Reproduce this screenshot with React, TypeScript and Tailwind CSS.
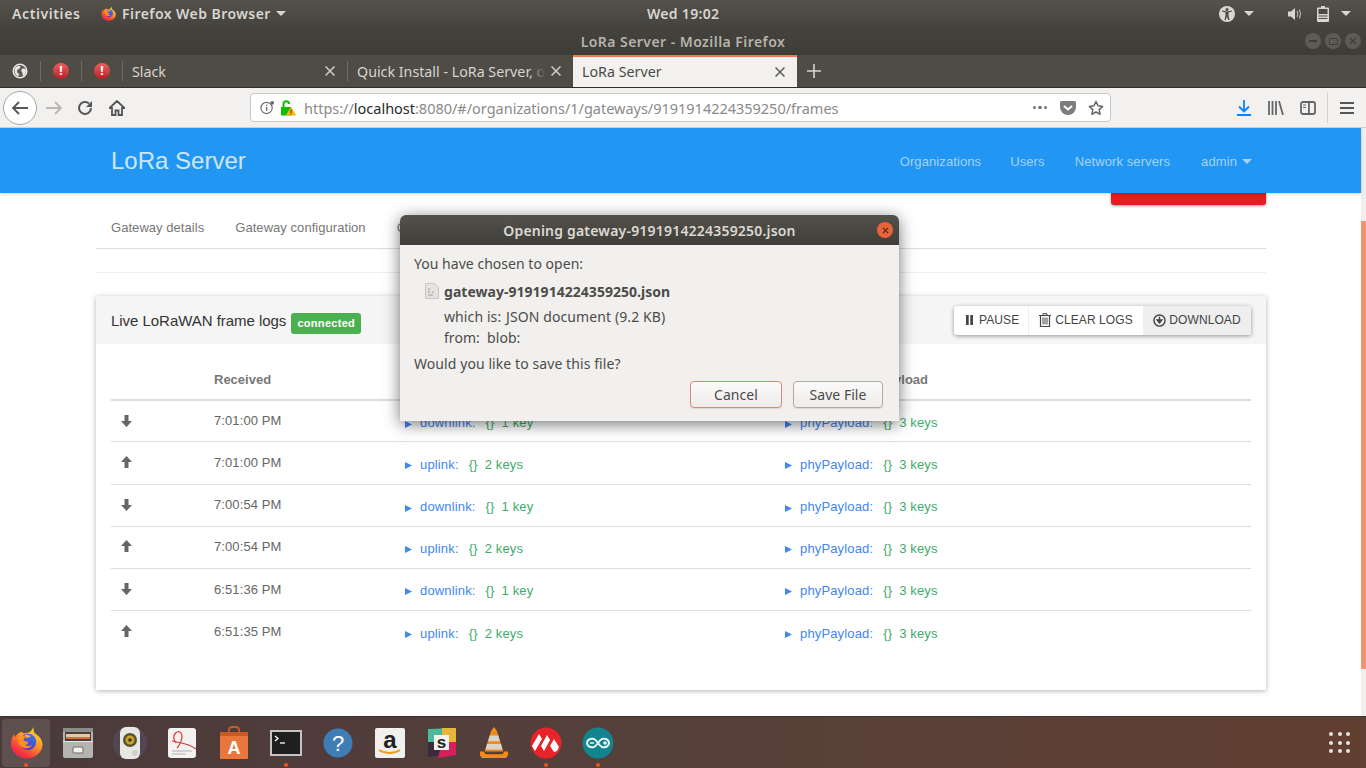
const ui = "font-['Noto_Sans',sans-serif]";
const web = "font-['Liberation_Sans',sans-serif]";

function Caret({ className = "" }: { className?: string }) {
  return (
    <svg viewBox="0 0 10 5" className={`h-[5px] w-[10px] ${className}`}>
      <path d="M0 0h10L5 5z" fill="currentColor" />
    </svg>
  );
}

function FirefoxLogo({ size }: { size: number }) {
  const id = `ff${size}`;
  return (
    <svg viewBox="0 0 32 32" width={size} height={size}>
      <defs>
        <linearGradient id={id} x1="0.85" y1="0" x2="0.2" y2="1">
          <stop offset="0" stopColor="#ffe13a" />
          <stop offset="0.4" stopColor="#ff9a22" />
          <stop offset="0.8" stopColor="#f5343f" />
          <stop offset="1" stopColor="#e8205f" />
        </linearGradient>
        <linearGradient id={`${id}b`} x1="0.8" y1="0" x2="0.2" y2="1">
          <stop offset="0" stopColor="#2f7cf0" />
          <stop offset="1" stopColor="#6a2ab0" />
        </linearGradient>
      </defs>
      <path d="M22.5 1c.5 3 .5 4.500 1.500 6 4 2.500 7.500 6 7.500 11 0 7.500-7 13.500-15 13.500S1 25.500 1 17.500C1 13.500 2 10.500 4 8l1 3c1-2.500 3.500-4.500 6-5.500 1 1 2 1.500 3.500 1.500 3.500 0 7-2 8-6z" fill={`url(#${id})`} />
      <circle cx="17.500" cy="15.500" r="8" fill={`url(#${id}b)`} />
      <path d="M8 11c-1 6 2 10 7 10.500 3 .2 5.500-1 6.500-3-2 1-5 1.200-7 0 2-.3 3.500-1.500 3-3-1.500-.8-3.500-.8-4.500-2 .5-1.500 2-2 3-3-3-1.500-6-1-8 .5z" fill="#ff8f1f" />
      <path d="M14 8.500c2.500-.5 5 .5 6.500 2-1.500 0-3 .5-4 1.500-1-1.500-2-2.500-2.500-3.500z" fill="#ffb02e" />
    </svg>
  );
}

function AlertDot() {
  return (
    <span className="flex h-[16px] w-[16px] items-center justify-center rounded-full bg-gradient-to-b from-[#e8605f] to-[#b81c25] text-[12px] font-bold leading-none text-white">
      !
    </span>
  );
}

function Globe() {
  return (
    <svg viewBox="0 0 16 16" className="h-[16px] w-[16px]">
      <circle cx="8" cy="8" r="7.5" fill="#e8e8e6" />
      <circle cx="8" cy="8" r="6" fill="#5c5a55" />
      <path d="M3 5c2-2 3-2 5-2 1 1 0 2-1 3S5 6 5 8s1 2 2 3-1 2-2 2c-2-2-3-5-2-8zm7 1c2-1 3 0 4 1 0 3-1 5-3 6-1-1 0-3-1-4s-1-2 0-3z" fill="#e8e8e6" />
    </svg>
  );
}

function Close({ dark }: { dark?: boolean }) {
  return (
    <svg viewBox="0 0 10 10" className="h-[10px] w-[10px]">
      <path d="M.5.5l9 9M9.5.5l-9 9" stroke={dark ? "#5a5a5a" : "#cfcdc8"} strokeWidth="1.5" fill="none" />
    </svg>
  );
}

function TopBar() {
  return (
    <div className={`${ui} flex h-[27px] items-center bg-gradient-to-b from-[#55524b] to-[#45433d] text-[14px] font-semibold text-[#d8d6d1]`}>
      <div className="flex flex-1 items-center">
        <span className="ml-[12px] w-[68px] tracking-[0.6px]">Activities</span>
        <span className="ml-[21px]"><FirefoxLogo size={15} /></span>
        <span className="ml-[6px] tracking-[0.45px]">Firefox Web Browser</span>
        <Caret className="ml-[5px]" />
      </div>
      <span className="w-[72px] whitespace-nowrap text-center tracking-[0.3px]">Wed 19:02</span>
      <div className="flex flex-1 items-center justify-end">
        <svg viewBox="0 0 16 16" className="h-[16px] w-[16px]">
          <circle cx="8" cy="8" r="8" fill="currentColor" />
          <circle cx="8" cy="3.6" r="1.5" fill="#4c4a44" />
          <path d="M3 5.5l3.5 1v3L5.5 14h1.3L8 10.5 9.2 14h1.3l-1-4.500v-3l3.500-1-.3-1L8 5.500 3.300 4.500z" fill="#4c4a44" />
        </svg>
        <Caret className="ml-[9px]" />
        <svg viewBox="0 0 16 16" className="ml-[33px] h-[16px] w-[16px]">
          <path d="M1 5.500h3L8 2v12l-4-3.500H1z" fill="currentColor" />
          <path d="M10 5c1 1.500 1 4.500 0 6M12 3.500c2 2.500 2 6.500 0 9" stroke="currentColor" strokeWidth="1.2" fill="none" opacity=".75" />
        </svg>
        <svg viewBox="0 0 12 16" className="ml-[14px] h-[16px] w-[12px]">
          <path d="M4 0h4v1.500h3a1 1 0 011 1V15a1 1 0 01-1 1H1a1 1 0 01-1-1V2.500a1 1 0 011-1h3z" fill="currentColor" />
          <rect x="1.500" y="3" width="9" height="5" fill="#4c4a44" />
          <rect x="1.500" y="9.500" width="9" height="1" fill="#4c4a44" />
          <rect x="1.500" y="12" width="9" height="1" fill="#4c4a44" />
        </svg>
        <Caret className="ml-[12px] mr-[15px]" />
      </div>
    </div>
  );
}

function TitleBar() {
  return (
    <div className={`${ui} relative flex h-[28px] items-center justify-center bg-gradient-to-b from-[#45433d] to-[#3d3c36] text-[14px] font-semibold tracking-[0.45px] text-[#b5b3ad]`}>
      <span>LoRa Server - Mozilla Firefox</span>
      <div className="absolute right-[5px] top-[6px] flex gap-[4px]">
        {["min", "max", "close"].map((k) => (
          <span key={k} className="flex h-[16px] w-[16px] items-center justify-center rounded-full bg-[#5d5b55]">
            {k === "min" && <span className="h-[1.5px] w-[8px] bg-[#3f3d38]" />}
            {k === "max" && <span className="h-[7px] w-[9px] rounded-[1px] border border-[#3f3d38]" />}
            {k === "close" && (
              <svg viewBox="0 0 8 8" className="h-[8px] w-[8px]">
                <path d="M1 1l6 6M7 1L1 7" stroke="#3f3d38" strokeWidth="1.3" />
              </svg>
            )}
          </span>
        ))}
      </div>
    </div>
  );
}

function TabSep() {
  return (
    <div className="flex h-[32px] items-center">
      <span className="h-[20px] w-px bg-[#6e6b64]" />
    </div>
  );
}

function TabStrip() {
  return (
    <div className={`${ui} flex h-[33px] items-end border-b border-[#2f2e2a] bg-[#4f4c45] text-[14.25px] text-[#d6d4cf]`}>
      <div className="flex h-[32px] w-[40px] items-center justify-center"><Globe /></div>
      <TabSep />
      <div className="flex h-[32px] w-[40px] items-center justify-center"><AlertDot /></div>
      <TabSep />
      <div className="flex h-[32px] w-[40px] items-center justify-center"><AlertDot /></div>
      <TabSep />
      <div className="flex h-[32px] w-[224px] items-center pl-[9px] pr-[12px]">
        <span className="flex-1 translate-y-[1px]">Slack</span>
        <Close />
      </div>
      <TabSep />
      <div className="flex h-[32px] w-[225px] items-center pl-[9px] pr-[12px]">
        <span className="relative translate-y-[1px] whitespace-nowrap">
          Quick Install - LoRa Server, o
          <span className="absolute inset-y-0 right-0 w-[16px] bg-gradient-to-r from-transparent to-[#4f4c45]" />
        </span>
        <span className="ml-auto"><Close /></span>
      </div>
      <div className="flex h-[32px] w-[224px] items-center border-t-2 border-[#f0774f] bg-[#f2f1ef] pl-[9px] pr-[12px] text-[#4a4a48]">
        <span className="flex-1">LoRa Server</span>
        <Close dark />
      </div>
      <div className="flex h-[32px] w-[34px] items-center justify-center">
        <svg viewBox="0 0 14 14" className="h-[14px] w-[14px]">
          <path d="M7 0v14M0 7h14" stroke="#d6d4cf" strokeWidth="1.6" />
        </svg>
      </div>
    </div>
  );
}

function Toolbar() {
  return (
    <div className={`${ui} flex h-[40px] items-center border-b border-[#cfcdca] bg-[#f2f1ef] text-[#555]`}>
      <div className="ml-[3px] flex h-[34px] w-[34px] items-center justify-center rounded-full border border-[#a8a8a6] bg-white">
        <svg viewBox="0 0 18 16" className="h-[16px] w-[18px]">
          <path d="M17 8H2M8 2L2 8l6 6" stroke="#555" strokeWidth="1.8" fill="none" />
        </svg>
      </div>
      <svg viewBox="0 0 18 16" className="ml-[8px] h-[16px] w-[18px]">
        <path d="M1 8h15M10 2l6 6-6 6" stroke="#b8b7b5" strokeWidth="1.8" fill="none" />
      </svg>
      <svg viewBox="0 0 16 16" className="ml-[14px] h-[16px] w-[16px]">
        <path d="M14 8a6 6 0 11-2-4.500" stroke="#555" strokeWidth="2" fill="none" />
        <path d="M15 1v6H9z" fill="#555" />
      </svg>
      <svg viewBox="0 0 16 16" className="ml-[16px] h-[16px] w-[16px]">
        <path d="M8 1L0.500 8H3v7h3.500v-4.500h3V15H13V8h2.500z" fill="none" stroke="#555" strokeWidth="1.8" />
      </svg>
      <div className="ml-[125px] flex h-[29px] w-[861px] items-center rounded-[4px] border border-[#c9c7c4] bg-white pl-[9px] pr-[6px]">
        <svg viewBox="0 0 16 16" className="h-[15px] w-[15px]">
          <circle cx="7" cy="8.500" r="6" fill="none" stroke="#6a6a6a" strokeWidth="1.2" />
          <rect x="6.300" y="7.500" width="1.500" height="4" fill="#6a6a6a" />
          <rect x="6.300" y="5" width="1.500" height="1.500" fill="#6a6a6a" />
          <circle cx="13" cy="3" r="2" fill="#6a6a6a" />
        </svg>
        <svg viewBox="0 0 16 16" className="ml-[5px] h-[16px] w-[16px]">
          <path d="M1 7h10v8.500H1z" fill="#12bc00" />
          <path d="M3.500 7V4a2.800 2.800 0 015.600 0" stroke="#12bc00" strokeWidth="2" fill="none" />
          <path d="M11 6.500l5 9H6z" fill="#ffb400" />
          <rect x="10.500" y="9.500" width="1" height="3.500" fill="#333" />
          <rect x="10.500" y="13.700" width="1" height="1" fill="#333" />
        </svg>
        <span className="ml-[8px] translate-y-[1px] whitespace-nowrap text-[14.5px] tracking-[-0.015px] text-[#8a8a88]">
          https://<span className="text-[#2a2a2a]">localhost</span>:8080/#/organizations/1/gateways/9191914224359250/frames
        </span>
        <div className="ml-auto flex items-center">
          <span className="flex gap-[2px]">
            <i className="h-[3.5px] w-[3.5px] rounded-full bg-[#777]" />
            <i className="h-[3.5px] w-[3.5px] rounded-full bg-[#777]" />
            <i className="h-[3.5px] w-[3.5px] rounded-full bg-[#777]" />
          </span>
          <svg viewBox="0 0 16 14" className="ml-[13px] h-[14px] w-[16px]">
            <path d="M1.500 0h13A1.500 1.500 0 0116 1.500V6a8 8 0 01-16 0V1.500A1.500 1.500 0 011.500 0z" fill="#7d7d7d" />
            <path d="M4 5l4 3.500L12 5" stroke="#fff" strokeWidth="2" fill="none" />
          </svg>
          <svg viewBox="0 0 16 16" className="ml-[12px] h-[16px] w-[16px]">
            <path d="M8 1.500l2 4.300 4.700.6-3.500 3.200.9 4.700L8 12l-4.100 2.300.9-4.700L1.300 6.400 6 5.800z" fill="none" stroke="#666" strokeWidth="1.500" strokeLinejoin="round" />
          </svg>
        </div>
      </div>
      <svg viewBox="0 0 14 16" className="ml-[126px] h-[16px] w-[14px]">
        <path d="M7 0v11M2 6.500l5 5 5-5" stroke="#0a84ff" strokeWidth="1.800" fill="none" />
        <rect y="14" width="14" height="2" fill="#0a84ff" />
      </svg>
      <svg viewBox="0 0 16 14" className="ml-[17px] h-[14px] w-[16px]">
        <path d="M1 0v14M4.500 0v14M8 0v14M11 0l4 14" stroke="#666" strokeWidth="1.800" fill="none" />
      </svg>
      <svg viewBox="0 0 16 14" className="ml-[16px] h-[14px] w-[16px]">
        <rect x="1" y="1" width="14" height="12" rx="2" fill="none" stroke="#666" strokeWidth="1.800" />
        <rect x="8" y="1" width="1.800" height="12" fill="#666" />
        <path d="M3 4h3M3 6.500h3" stroke="#666" strokeWidth="1" />
      </svg>
      <span className="ml-[11px] h-[31px] w-px bg-[#d5d3d0]" />
      <svg viewBox="0 0 14 12" className="ml-[12px] h-[12px] w-[14px]">
        <path d="M0 1h14M0 6h14M0 11h14" stroke="#555" strokeWidth="1.800" />
      </svg>
    </div>
  );
}

function NavBar() {
  return (
    <nav className="relative z-10 flex h-[65px] shrink-0 items-center bg-[#2196f3] pl-[111px] pr-[109px] shadow-[0_1px_3px_rgba(0,0,0,0.2)]">
      <span className="text-[24px] text-[#cfe6fb]">LoRa Server</span>
      <div className="ml-auto flex translate-y-[1px] items-center text-[13px] tracking-[0.1px] text-[#a5d3f9]">
        <span>Organizations</span>
        <span className="ml-[29px]">Users</span>
        <span className="ml-[30px]">Network servers</span>
        <span className="ml-[31px]">admin</span>
        <Caret className="ml-[5px] h-[4px] w-[8px]" />
      </div>
    </nav>
  );
}

const rows = [
  { dir: "down", time: "7:01:00 PM", name: "downlink", keys: "1 key" },
  { dir: "up", time: "7:01:00 PM", name: "uplink", keys: "2 keys" },
  { dir: "down", time: "7:00:54 PM", name: "downlink", keys: "1 key" },
  { dir: "up", time: "7:00:54 PM", name: "uplink", keys: "2 keys" },
  { dir: "down", time: "6:51:36 PM", name: "downlink", keys: "1 key" },
  { dir: "up", time: "6:51:35 PM", name: "uplink", keys: "2 keys" },
];

function JsonCell({ name, keys, low }: { name: string; keys: string; low: boolean }) {
  return (
    <div className={`flex items-center whitespace-nowrap text-[13px] tracking-[0.15px] ${low ? "translate-y-[2px]" : "translate-y-[1px]"}`}>
      <svg viewBox="0 0 7 7" className="h-[7px] w-[7px] translate-y-[1px]">
        <path d="M0 0l7 3.500L0 7z" fill="#4285f4" />
      </svg>
      <span className="ml-[8px] text-[#4285f4]">{name}:</span>
      <span className="ml-[10px] text-[#3dab6a]">{"{}"}</span>
      <span className="ml-[7px] text-[#3dab6a]">{keys}</span>
    </div>
  );
}

function LogsCard() {
  return (
    <div className="mt-[23px] h-[394px] bg-white shadow-[0_1px_5px_rgba(0,0,0,0.3)]">
      <div className="flex h-[48px] items-center bg-[#f5f5f5] px-[15px]">
        <span className="translate-y-[1px] text-[15px] tracking-[-0.04px] text-[#333]">Live LoRaWAN frame logs</span>
        <span className="ml-[5px] flex h-[21px] w-[70px] translate-y-[3px] items-center justify-center rounded-[3px] bg-[#4caf50] text-[11px] font-bold tracking-[0.3px] text-white">
          connected
        </span>
        <div className="ml-auto flex h-[29px] rounded-[3px] bg-white text-[12px] tracking-[0.1px] text-[#444] shadow-[0_1px_4px_rgba(0,0,0,0.4)]">
          <span className="flex w-[75px] items-center gap-[6px] border-r border-[#eee] pl-[12px]">
            <svg viewBox="0 0 7 10" className="h-[10px] w-[7px]">
              <path d="M0 0h2.700v10H0zM4.300 0H7v10H4.300z" fill="#444" />
            </svg>
            PAUSE
          </span>
          <span className="flex w-[114px] items-center justify-center gap-[4px]">
            <svg viewBox="0 0 12 14" className="h-[14px] w-[12px]">
              <path d="M0 2.500h12M4 2.500V.7h4v1.800" stroke="#444" strokeWidth="1" fill="none" />
              <path d="M1.500 2.500v11h9v-11" stroke="#444" strokeWidth="1.200" fill="none" />
              <path d="M4 4.500v7M6 4.500v7M8 4.500v7" stroke="#444" strokeWidth="1" />
            </svg>
            CLEAR LOGS
          </span>
          <span className="flex w-[108px] items-center justify-center gap-[3px] rounded-r-[3px] bg-[#eeeeee]">
            <svg viewBox="0 0 14 14" className="h-[13px] w-[13px]">
              <circle cx="7" cy="7" r="6" fill="none" stroke="#444" strokeWidth="1.500" />
              <path d="M7 3v5M4.500 6.500L7 9.500l2.500-3z" stroke="#444" strokeWidth="1.500" fill="#444" />
            </svg>
            DOWNLOAD
          </span>
        </div>
      </div>
      <div className="px-[15px]">
        <div className="grid h-[57px] grid-cols-[103px_191px_380px_1fr] items-center border-b-2 border-[#ddd] pt-[16px] text-[13px] font-bold text-[#777]">
          <span />
          <span>Received</span>
          <span>LoRaWAN RX parameters</span>
          <span>LoRaWAN PHYPayload</span>
        </div>
        {rows.map((r, i) => (
          <div
            key={i}
            className={`grid grid-cols-[103px_191px_380px_1fr] items-center text-[13px] tracking-[0.1px] text-[#666] ${i === 0 ? "h-[41.25px]" : "h-[42.25px]"} ${i < 5 ? "border-b border-[#ddd]" : ""}`}
          >
            <span className={`pl-[10px] ${i === 0 || i === 2 ? "" : "-translate-y-[1px]"}`}>
              <svg viewBox="0 0 11 12" className="h-[12px] w-[11px]">
                <path d={r.dir === "down" ? "M3.500 0h4v6H11L5.500 12 0 6h3.500z" : "M3.500 12h4V6H11L5.500 0 0 6h3.500z"} fill="#666" />
              </svg>
            </span>
            <span className={i === 3 || i === 5 ? "-translate-y-[1px]" : ""}>{r.time}</span>
            <JsonCell name={r.name} keys={r.keys} low={i < 3} />
            <JsonCell name="phyPayload" keys="3 keys" low={i < 3} />
          </div>
        ))}
      </div>
    </div>
  );
}

function Dialog() {
  return (
    <div className={`${ui} absolute left-[400px] top-[215px] z-20 h-[206px] w-[499px] overflow-hidden rounded-t-[6px] bg-[#f1f0ee] text-[14px] text-[#4c4c4a] shadow-[0_3px_16px_rgba(0,0,0,0.55)]`}>
      <div className="relative flex h-[30px] items-center justify-center bg-gradient-to-b from-[#55524b] to-[#3e3d37] font-semibold tracking-[0.2px] text-[#dbd9d4]">
        Opening gateway-9191914224359250.json
        <span className="absolute right-[6px] top-[7px] flex h-[16px] w-[16px] items-center justify-center rounded-full bg-[#e9633a]">
          <svg viewBox="0 0 8 8" className="h-[7px] w-[7px]">
            <path d="M1 1l6 6M7 1L1 7" stroke="#4a2a1c" strokeWidth="1.400" />
          </svg>
        </span>
      </div>
      <div className="px-[14px] tracking-[0.03px]">
        <p className="mt-[9px] leading-[20px]">You have chosen to open:</p>
        <div className="ml-[11px] mt-[7px] flex h-[20px] items-center">
          <svg viewBox="0 0 14 16" className="h-[16px] w-[14px]">
            <path d="M.5.5h9l4 4v11H.5z" fill="#e4e3e1" stroke="#c8c7c5" />
            <path d="M3 6h2M3 9h2M7 9h2M3 12h5" stroke="#9a9a98" strokeWidth="1" />
          </svg>
          <span className="ml-[5px] font-bold">gateway-9191914224359250.json</span>
        </div>
        <p className="ml-[30px] mt-[6px] leading-[20px] tracking-[0.1px]">
          which is:&nbsp;<span className="ml-[1px]">JSON document (9.2 KB)</span>
        </p>
        <p className="ml-[30px] mt-[1px] leading-[20px]">from:&nbsp; blob:</p>
        <p className="mt-[6px] leading-[20px] tracking-[0.08px]">Would you like to save this file?</p>
        <div className="mt-[7px] flex justify-end gap-[11px] pr-[2px]">
          <span className="flex h-[27px] w-[92px] items-center justify-center rounded-[4px] border border-[#d98a70] bg-gradient-to-b from-[#fbfafa] to-[#edecea] shadow-[0_1px_1px_rgba(0,0,0,0.1)]">
            Cancel
          </span>
          <span className="flex h-[27px] w-[90px] items-center justify-center rounded-[4px] border border-[#aeaca8] bg-gradient-to-b from-[#fbfafa] to-[#edecea] shadow-[0_1px_1px_rgba(0,0,0,0.1)]">
            Save File
          </span>
        </div>
      </div>
    </div>
  );
}

function Page() {
  return (
    <div className={`${web} relative flex h-[588px] overflow-hidden bg-white`}>
      <div className="flex min-w-0 flex-1 flex-col">
        <NavBar />
        <div className="ml-[96px] w-[1170px]">
          <div className="ml-auto h-[12px] w-[155px] rounded-b-[3px] bg-[#e51c23] shadow-[0_1px_3px_rgba(0,0,0,0.4)]" />
          <div className="flex h-[44px] items-center gap-[31px] border-b border-[#ddd] pl-[15px] pt-[2px] text-[13px] tracking-[0.05px] text-[#777]">
            <span>Gateway details</span>
            <span>Gateway configuration</span>
            <span>Gateway discovery</span>
            <span>Live LoRaWAN frames</span>
          </div>
          <div className="h-[24px] border-b border-[#eee]" />
          <LogsCard />
        </div>
      </div>
      <div className="w-[5px] shrink-0 bg-[#f0efed] pt-[93px]">
        <div className="h-[448px] bg-[#f2936c]" />
      </div>
    </div>
  );
}

function DockSlot({ children, dot, active }: { children: React.ReactNode; dot?: boolean; active?: boolean }) {
  return (
    <div className={`relative flex h-[48px] w-[48px] items-center justify-center rounded-[4px] ${active ? "bg-[#5f5050]" : ""}`}>
      {children}
      {dot && <span className="absolute bottom-0 left-1/2 h-[4px] w-[4px] -translate-x-1/2 rounded-full bg-[#e9571f]" />}
    </div>
  );
}

function Dock() {
  return (
    <div className="flex h-[52px] items-center justify-between border-t border-[#3d3431] bg-gradient-to-r from-[#4a3a3b] via-[#56403a] to-[#613f31] pl-[2px] pr-[16px]">
      <div className="flex gap-[4px]">
        <DockSlot active dot>
          <FirefoxLogo size={33} />
        </DockSlot>
        <DockSlot>
          <svg viewBox="0 0 32 32" width="32" height="32">
            <rect x="1" y="1" width="30" height="30" rx="2" fill="#b4b4b2" />
            <rect x="1" y="1" width="30" height="4" fill="#8c8c8a" />
            <rect x="3" y="5" width="26" height="9" fill="#4a3f38" />
            <rect x="4" y="7" width="24" height="3" fill="#e8c8a0" />
            <rect x="4" y="10" width="24" height="2" fill="#d96a3a" />
            <rect x="1" y="14" width="30" height="1" fill="#e6e6e4" />
            <rect x="11" y="20" width="10" height="6" rx="1" fill="#f0f0ee" stroke="#6a6a68" />
          </svg>
        </DockSlot>
        <DockSlot>
          <svg viewBox="0 0 36 36" width="36" height="36">
            <ellipse cx="18" cy="18" rx="17" ry="17" fill="#5a5570" opacity=".45" />
            <rect x="8" y="2" width="20" height="32" rx="6" fill="#e8e8e2" />
            <circle cx="18" cy="15" r="7" fill="#5b5236" />
            <circle cx="18" cy="15" r="4.500" fill="#c8a428" />
            <circle cx="18" cy="15" r="1.800" fill="#3c3520" />
            <circle cx="23" cy="28" r="3" fill="#cfcfca" />
          </svg>
        </DockSlot>
        <DockSlot>
          <svg viewBox="0 0 32 32" width="32" height="32">
            <rect x="2" y="1" width="28" height="30" rx="3" fill="#f4f2f0" />
            <path d="M10 16C4 8 12 2 15 6c3 5-2 13-4 15M6 14c8 2 16 2 24 8" stroke="#d33a3a" strokeWidth="1.200" fill="none" />
            <path d="M6 24h20M6 27h14" stroke="#c8c8c6" strokeWidth="1.300" />
          </svg>
        </DockSlot>
        <DockSlot>
          <svg viewBox="0 0 32 34" width="32" height="34">
            <path d="M11 8V4a3 3 0 013-3h4a3 3 0 013 3v4" stroke="#c85a28" strokeWidth="1.800" fill="none" />
            <rect x="2" y="6" width="28" height="27" rx="1" fill="#e9773d" />
            <rect x="2" y="6" width="28" height="4" fill="#c85a28" />
            <text x="16" y="28" textAnchor="middle" fontSize="18" fontWeight="700" fill="#fff" fontFamily="Liberation Sans">A</text>
          </svg>
        </DockSlot>
        <DockSlot dot>
          <svg viewBox="0 0 32 32" width="32" height="32">
            <rect x="0" y="3" width="32" height="26" fill="#c4c4c2" />
            <rect x="2" y="5" width="28" height="22" fill="#1f1f1f" />
            <path d="M5 9l3 2.500L5 14" stroke="#fff" strokeWidth="1.300" fill="none" />
            <path d="M10 16h5" stroke="#fff" strokeWidth="1.300" />
          </svg>
        </DockSlot>
        <DockSlot>
          <svg viewBox="0 0 32 32" width="32" height="32">
            <circle cx="16" cy="16" r="14.500" fill="#3f7db5" />
            <text x="16" y="24" textAnchor="middle" fontSize="22" fill="#fff" fontFamily="Liberation Sans">?</text>
          </svg>
        </DockSlot>
        <DockSlot>
          <svg viewBox="0 0 32 32" width="32" height="32">
            <rect x="1" y="1" width="30" height="30" rx="2" fill="#f0f0ee" />
            <text x="16" y="21" textAnchor="middle" fontSize="24" fontWeight="700" fill="#222" fontFamily="Liberation Sans">a</text>
            <path d="M5 23c6 4 15 4 21 0" stroke="#f39a1e" strokeWidth="1.800" fill="none" />
          </svg>
        </DockSlot>
        <DockSlot>
          <svg viewBox="0 0 32 32" width="32" height="32">
            <path d="M2 2L30 1v14H2z" fill="#4db89a" />
            <path d="M16 1h14v14H16z" fill="#e8b43a" />
            <path d="M2 15v15l14-2V15z" fill="#3a2a3a" />
            <path d="M16 15h14v13l-18 3z" fill="#d81e5b" />
            <rect x="8" y="8" width="15" height="15" fill="#f4f2ee" />
            <text x="15.500" y="21" textAnchor="middle" fontSize="17" fontWeight="700" fill="#222" fontFamily="Liberation Sans">s</text>
          </svg>
        </DockSlot>
        <DockSlot>
          <svg viewBox="0 0 32 34" width="30" height="34">
            <path d="M16 0l3 4 7 22H6l7-22z" fill="#f08a1c" />
            <path d="M11.500 9h9l1.800 6H9.700zM8.500 18h15l1.500 6H7z" fill="#d8d4cc" />
            <path d="M1 26h4l2 3h18l2-3h4v4l-2 3H3l-2-3z" fill="#f08a1c" />
          </svg>
        </DockSlot>
        <DockSlot dot>
          <svg viewBox="0 0 32 32" width="32" height="32">
            <circle cx="16" cy="16" r="15.500" fill="#e8232a" />
            <path d="M2 19L9 7l3 5-7 12zM11 19l6-11 3 5-6 11zM20 19l4-7 5 8-2 4-3 1z" fill="#fff" />
          </svg>
        </DockSlot>
        <DockSlot dot>
          <svg viewBox="0 0 32 32" width="32" height="32">
            <circle cx="16" cy="16" r="15.500" fill="#11848e" />
            <path d="M12 12c-5-1-7 2-7 4s2 5 7 4c3-1 5-7 8-8 5-1 7 2 7 4s-2 5-7 4c-3-1-5-7-8-8z" fill="none" stroke="#e8f4f4" strokeWidth="2" />
            <path d="M8 16h4M21 16h4M23 14v4" stroke="#e8f4f4" strokeWidth="1.300" />
          </svg>
        </DockSlot>
      </div>
      <div className="grid grid-cols-3 gap-[4.5px]">
        {Array.from({ length: 9 }).map((_, i) => (
          <span key={i} className="h-[4px] w-[4px] rounded-full bg-[#e6e3e1]" />
        ))}
      </div>
    </div>
  );
}

export default function App() {
  return (
    <div className="relative flex h-[768px] w-[1366px] flex-col overflow-hidden">
      <TopBar />
      <TitleBar />
      <TabStrip />
      <Toolbar />
      <Page />
      <Dock />
      <Dialog />
    </div>
  );
}
